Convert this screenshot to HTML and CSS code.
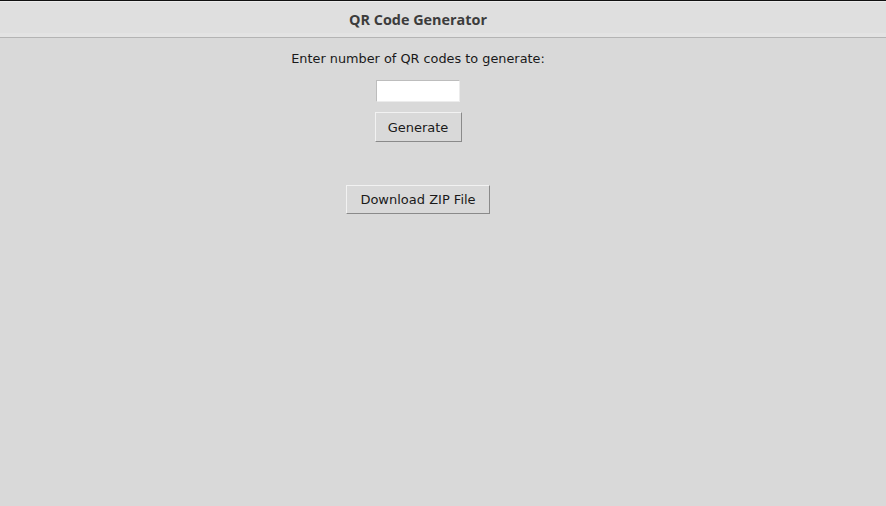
FILE: index.html
```html
<!DOCTYPE html>
<html>
<head>
<meta charset="utf-8">
<link rel="stylesheet" href="styles.css">
</head>
<body>
<div class="window">
  <div class="titlebar"><span class="title">QR Code Generator</span></div>
  <main class="content">
    <div class="label">Enter number of QR codes to generate:</div>
    <input class="entry" type="text">
    <button class="btn btn-generate">Generate</button>
    <button class="btn btn-download">Download ZIP File</button>
  </main>
</div>
</body>
</html>
```
FILE: styles.css
```css
html, body {
  margin: 0;
  padding: 0;
  background: #d9d9d9;
  width: 886px;
  height: 506px;
  overflow: hidden;
}
.window {
  width: 886px;
}
.titlebar {
  box-sizing: border-box;
  height: 38px;
  background: #dfdfdf;
  border-top: 1px solid #111;
  border-bottom: 1px solid #b4b4b4;
  box-shadow: inset 0 1px 0 #ececec, inset 0 -4px 0 #e3e3e3;
  display: flex;
  align-items: center;
  padding-right: 50px;
  justify-content: center;
}
.title {
  font-family: "Open Sans", "DejaVu Sans", sans-serif;
  font-weight: 700;
  font-size: 14.4px;
  color: #3c3c3c;
  margin-top: 1px;
}
.content {
  display: flex;
  flex-direction: column;
  align-items: center;
  padding-top: 13px;
  padding-right: 50px;
}
.label {
  font-family: "DejaVu Sans", sans-serif;
  font-size: 12.85px;
  color: #1a1a1a;
  line-height: 16px;
}
.entry {
  box-sizing: border-box;
  width: 84px;
  height: 22px;
  margin: 13px 1px 0 0;
  padding: 0;
  background: #ffffff;
  border: 1px solid #c4c4c4;
  border-top-color: #bdbdbd;
  border-left-color: #bdbdbd;
  border-bottom-color: #ececec;
  border-right-color: #ececec;
  outline: none;
}
.btn {
  box-sizing: border-box;
  font-family: "DejaVu Sans", sans-serif;
  font-size: 13px;
  color: #1a1a1a;
  background: #d9d9d9;
  border: 1px solid;
  border-top-color: #f2f2f2;
  border-left-color: #f2f2f2;
  border-bottom-color: #8a8a8a;
  border-right-color: #8a8a8a;
  border-radius: 0;
  padding: 0;
}
.btn-generate {
  width: 87px;
  height: 30px;
  margin: 10px 0 0 0;
}
.btn-download {
  width: 144px;
  height: 29px;
  margin: 43px 0 0 0;
}
```
